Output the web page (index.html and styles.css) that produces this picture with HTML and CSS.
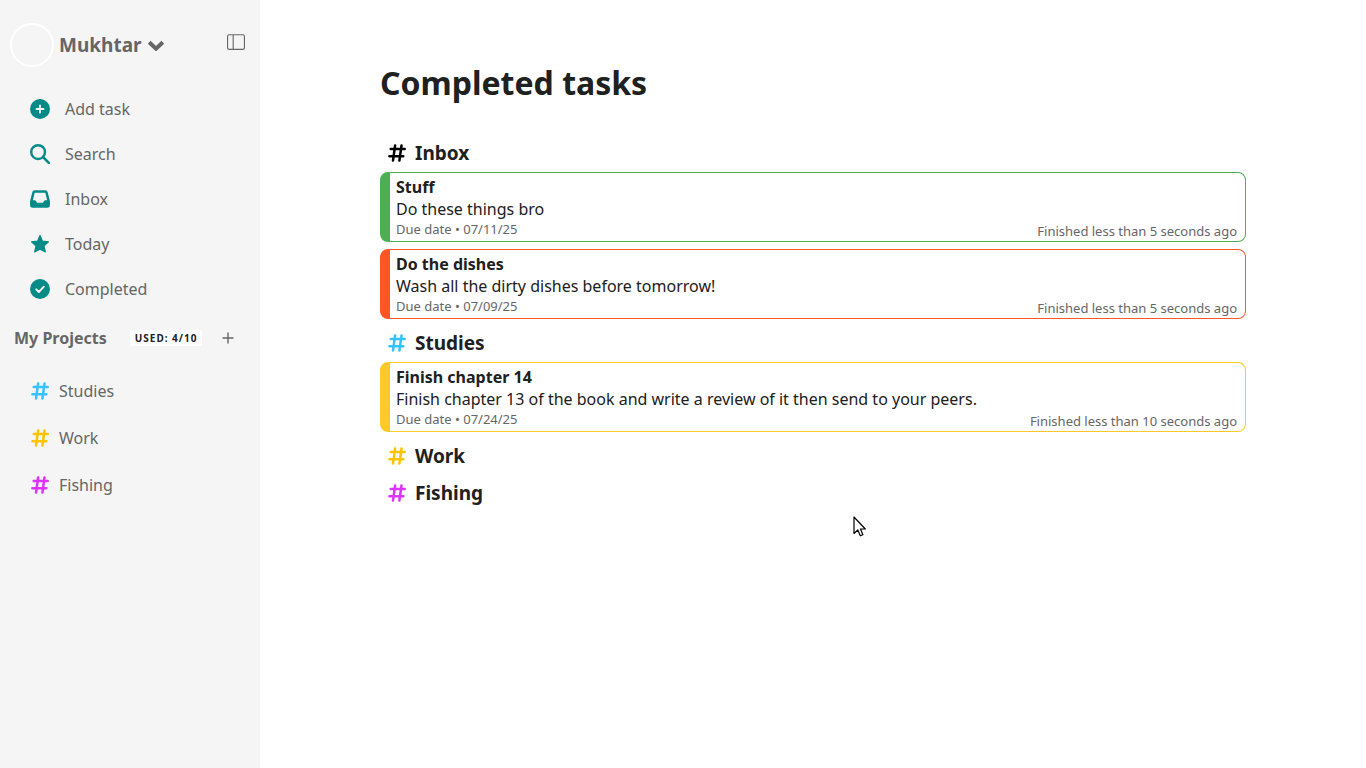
FILE: index.html
```html
<!DOCTYPE html>
<html lang="en">
<head>
<meta charset="utf-8">
<meta name="viewport" content="width=device-width, initial-scale=1">
<title>Completed tasks</title>
<link rel="stylesheet" href="styles.css">
</head>
<body>
<svg class="sprite" aria-hidden="true">
  <symbol id="hash" viewBox="0 0 18 18">
    <path d="M2.7 5.1H16.700M1.400 12.300H15.300M7.100 1.500 5 16.600M13.500 1.500 11.400 16.600" fill="none" stroke="currentColor" stroke-width="2.500" stroke-linecap="round"/>
  </symbol>
</svg>
<div class="app">
  <aside class="sidebar">
    <header class="profile">
      <button class="user" type="button">
        <span class="avatar"></span>
        <span class="user-name">Mukhtar</span>
        <svg class="chevron" viewBox="0 0 18 12" aria-hidden="true"><path d="M2.200 3.300 9 9.700 15.800 3.300" fill="none" stroke="currentColor" stroke-width="4"/></svg>
      </button>
      <button class="icon-button toggle" type="button" aria-label="Toggle sidebar">
        <svg class="toggle-icon" viewBox="0 0 16 16" fill="currentColor" aria-hidden="true"><path d="M0 3a2 2 0 0 1 2-2h12a2 2 0 0 1 2 2v10a2 2 0 0 1-2 2H2a2 2 0 0 1-2-2V3zm6-1v12h8a1 1 0 0 0 1-1V3a1 1 0 0 0-1-1H6zM5 2H2a1 1 0 0 0-1 1v10a1 1 0 0 0 1 1h3V2z"/></svg>
      </button>
    </header>
    <nav class="menu">
      <button class="menu-item" type="button">
        <svg class="menu-icon" viewBox="0 0 20 20" aria-hidden="true"><circle cx="10" cy="10" r="10" fill="currentColor"/><path d="M10 6.500v7M6.500 10h7" stroke="#f5f5f5" stroke-width="1.800" stroke-linecap="round"/></svg>
        <span>Add task</span>
      </button>
      <button class="menu-item" type="button">
        <svg class="menu-icon" viewBox="0 0 20 20" aria-hidden="true"><circle cx="8.1" cy="8.1" r="6.9" fill="none" stroke="currentColor" stroke-width="2.4"/><path d="M13 13l5.8 5.8" stroke="currentColor" stroke-width="2.6" stroke-linecap="round"/></svg>
        <span>Search</span>
      </button>
      <a class="menu-item" href="#inbox">
        <svg class="menu-icon" viewBox="0 0 512 512" fill="currentColor" aria-hidden="true"><path d="M121 32C91.600 32 66 52 58.900 80.500L1.900 308.400C.6 313.500 0 318.700 0 323.900V416c0 35.300 28.700 64 64 64H448c35.300 0 64-28.700 64-64V323.900c0-5.200-.6-10.400-1.900-15.500l-57-227.900C446 52 420.400 32 391 32H121zm0 64H391l48 192H387.800c-12.100 0-23.200 6.800-28.600 17.700l-14.300 28.600c-5.400 10.800-16.500 17.700-28.600 17.700H195.800c-12.100 0-23.200-6.800-28.600-17.700l-14.300-28.600c-5.400-10.800-16.500-17.700-28.600-17.700H73L121 96z"/></svg>
        <span>Inbox</span>
      </a>
      <a class="menu-item" href="#today">
        <svg class="menu-icon" viewBox="0 0 20 20" aria-hidden="true"><path d="M10 1.600 12.500 7.200 18.500 7.800 14 11.900 15.300 18 10 15.300 4.700 18 6 11.900 1.500 7.800 7.500 7.200Z" fill="currentColor" stroke="currentColor" stroke-width="1.200" stroke-linejoin="round"/></svg>
        <span>Today</span>
      </a>
      <a class="menu-item" href="#completed" aria-current="page">
        <svg class="menu-icon" viewBox="0 0 20 20" aria-hidden="true"><circle cx="10" cy="10" r="10" fill="currentColor"/><path d="M6.200 10.300 8.900 13 13.800 7.700" fill="none" stroke="#f5f5f5" stroke-width="1.900" stroke-linecap="round" stroke-linejoin="round"/></svg>
        <span>Completed</span>
      </a>
    </nav>
    <div class="projects-head">
      <h2 class="projects-title">My Projects</h2>
      <span class="badge">USED: 4/10</span>
      <button class="icon-button add" type="button" aria-label="Add project">
        <svg class="add-icon" viewBox="0 0 12 12" aria-hidden="true"><path d="M6 .5v11M.5 6h11" stroke="currentColor" stroke-width="1.400"/></svg>
      </button>
    </div>
    <nav class="projects" aria-label="My Projects">
      <a class="project" href="#studies"><svg class="hash blue" aria-hidden="true"><use href="#hash"/></svg><span>Studies</span></a>
      <a class="project" href="#work"><svg class="hash amber" aria-hidden="true"><use href="#hash"/></svg><span>Work</span></a>
      <a class="project" href="#fishing"><svg class="hash magenta" aria-hidden="true"><use href="#hash"/></svg><span>Fishing</span></a>
    </nav>
  </aside>

  <main class="content">
    <h1 class="page-title">Completed tasks</h1>
    <section>
      <h2 class="group-title"><svg class="hash black" aria-hidden="true"><use href="#hash"/></svg>Inbox</h2>
      <div class="tasks">
        <article class="task low">
          <div class="task-body">
            <h3 class="task-title">Stuff</h3>
            <p class="task-text">Do these things bro</p>
            <p class="task-meta">Due date • 07/11/25</p>
          </div>
          <p class="task-finished">Finished less than 5 seconds ago</p>
        </article>
        <article class="task high">
          <div class="task-body">
            <h3 class="task-title">Do the dishes</h3>
            <p class="task-text">Wash all the dirty dishes before tomorrow!</p>
            <p class="task-meta">Due date • 07/09/25</p>
          </div>
          <p class="task-finished">Finished less than 5 seconds ago</p>
        </article>
      </div>
    </section>
    <section>
      <h2 class="group-title"><svg class="hash blue" aria-hidden="true"><use href="#hash"/></svg>Studies</h2>
      <div class="tasks">
        <article class="task medium">
          <div class="task-body">
            <h3 class="task-title">Finish chapter 14</h3>
            <p class="task-text">Finish chapter 13 of the book and write a review of it then send to your peers.</p>
            <p class="task-meta">Due date • 07/24/25</p>
          </div>
          <p class="task-finished">Finished less than 10 seconds ago</p>
        </article>
      </div>
    </section>
    <section>
      <h2 class="group-title"><svg class="hash amber" aria-hidden="true"><use href="#hash"/></svg>Work</h2>
    </section>
    <section>
      <h2 class="group-title"><svg class="hash magenta" aria-hidden="true"><use href="#hash"/></svg>Fishing</h2>
    </section>
  </main>
</div>
<svg class="pointer" viewBox="0 0 13 21" aria-hidden="true"><path d="M1 1V17.500L4.800 14 7.300 19.800 9.900 18.700 7.500 13H12.300Z" fill="#fff" stroke="#000" stroke-width="1.200" stroke-linejoin="round"/></svg>
</body>
</html>
```
FILE: styles.css
```css
* {
  box-sizing: border-box;
  margin: 0;
}

body {
  font-family: "Noto Sans", sans-serif;
  font-size: 16px;
  line-height: 22px;
  color: #202020;
  background: #fff;
}

button {
  padding: 0;
  border: 0;
  background: none;
  font: inherit;
  color: inherit;
  cursor: pointer;
}

a {
  color: inherit;
  text-decoration: none;
}

svg {
  flex: none;
}

.sprite {
  display: none;
}

.app {
  display: flex;
  min-height: 100vh;
}

/* Sidebar */
.sidebar {
  flex: none;
  width: 260px;
  background: #f5f5f5;
  color: #666;
}

.profile {
  display: flex;
  justify-content: space-between;
  align-items: flex-start;
  padding: 23px 15px 19px 10px;
}

.user {
  display: flex;
  align-items: center;
  gap: 5px;
}

.avatar {
  width: 44px;
  height: 44px;
  border: 2px solid #fff;
  border-radius: 50%;
}

.user-name {
  font-size: 19px;
  font-weight: 700;
}

.chevron {
  width: 18px;
  height: 12px;
}

.icon-button {
  display: flex;
}

.toggle {
  padding-top: 10px;
}

.toggle-icon {
  width: 18px;
  height: 18px;
}

.menu {
  display: flex;
  flex-direction: column;
}

.menu-item {
  display: flex;
  align-items: center;
  gap: 15px;
  height: 45px;
  padding-left: 30px;
}

.menu-icon {
  width: 20px;
  height: 20px;
  color: #058b87;
}

.projects-head {
  display: flex;
  align-items: center;
  height: 54px;
  padding: 0 26px 0 14px;
}

.projects-title {
  font-size: 16px;
}

.badge {
  margin-left: 23px;
  padding: 0 5px;
  border-radius: 2px;
  background: #fff;
  color: #202020;
  font-size: 10px;
  font-weight: 700;
  line-height: 16px;
  letter-spacing: 1px;
}

.add {
  margin-left: auto;
}

.add-icon {
  width: 12px;
  height: 12px;
}

.projects {
  padding-top: 2px;
}

.project {
  display: flex;
  align-items: center;
  gap: 10px;
  height: 47px;
  padding-left: 31px;
}

.hash {
  width: 18px;
  height: 18px;
}

.black { color: #000; }
.blue { color: #33c3ff; }
.amber { color: #ffc400; }
.magenta { color: #dd33ff; }

/* Completed list */
.content {
  flex: 1;
  padding: 60px 120px;
}

.page-title {
  margin-bottom: 30px;
  font-size: 32px;
  line-height: 45px;
}

.group-title {
  display: flex;
  align-items: center;
  gap: 9px;
  height: 37px;
  padding: 0 0 2px 8px;
  font-size: 19px;
}

.tasks {
  display: grid;
  gap: 7px;
  padding-bottom: 6px;
}

.task {
  display: flex;
  justify-content: space-between;
  align-items: flex-end;
  gap: 16px;
  border: 1px solid;
  border-left-width: 10px;
  border-radius: 8px;
}

.low { border-color: #4caf50; }
.medium { border-color: #ffca28; }
.high { border-color: #ff5722; }

.task-body {
  padding: 3px 0 3px 6px;
}

.task-title {
  font-size: 16px;
}

.task-meta,
.task-finished {
  color: #666;
  font-size: 13px;
  line-height: 18px;
}

.task-finished {
  padding: 0 8px 1px 0;
}

.pointer {
  position: absolute;
  left: 853px;
  top: 516px;
  width: 13px;
  height: 21px;
  pointer-events: none;
}
```
